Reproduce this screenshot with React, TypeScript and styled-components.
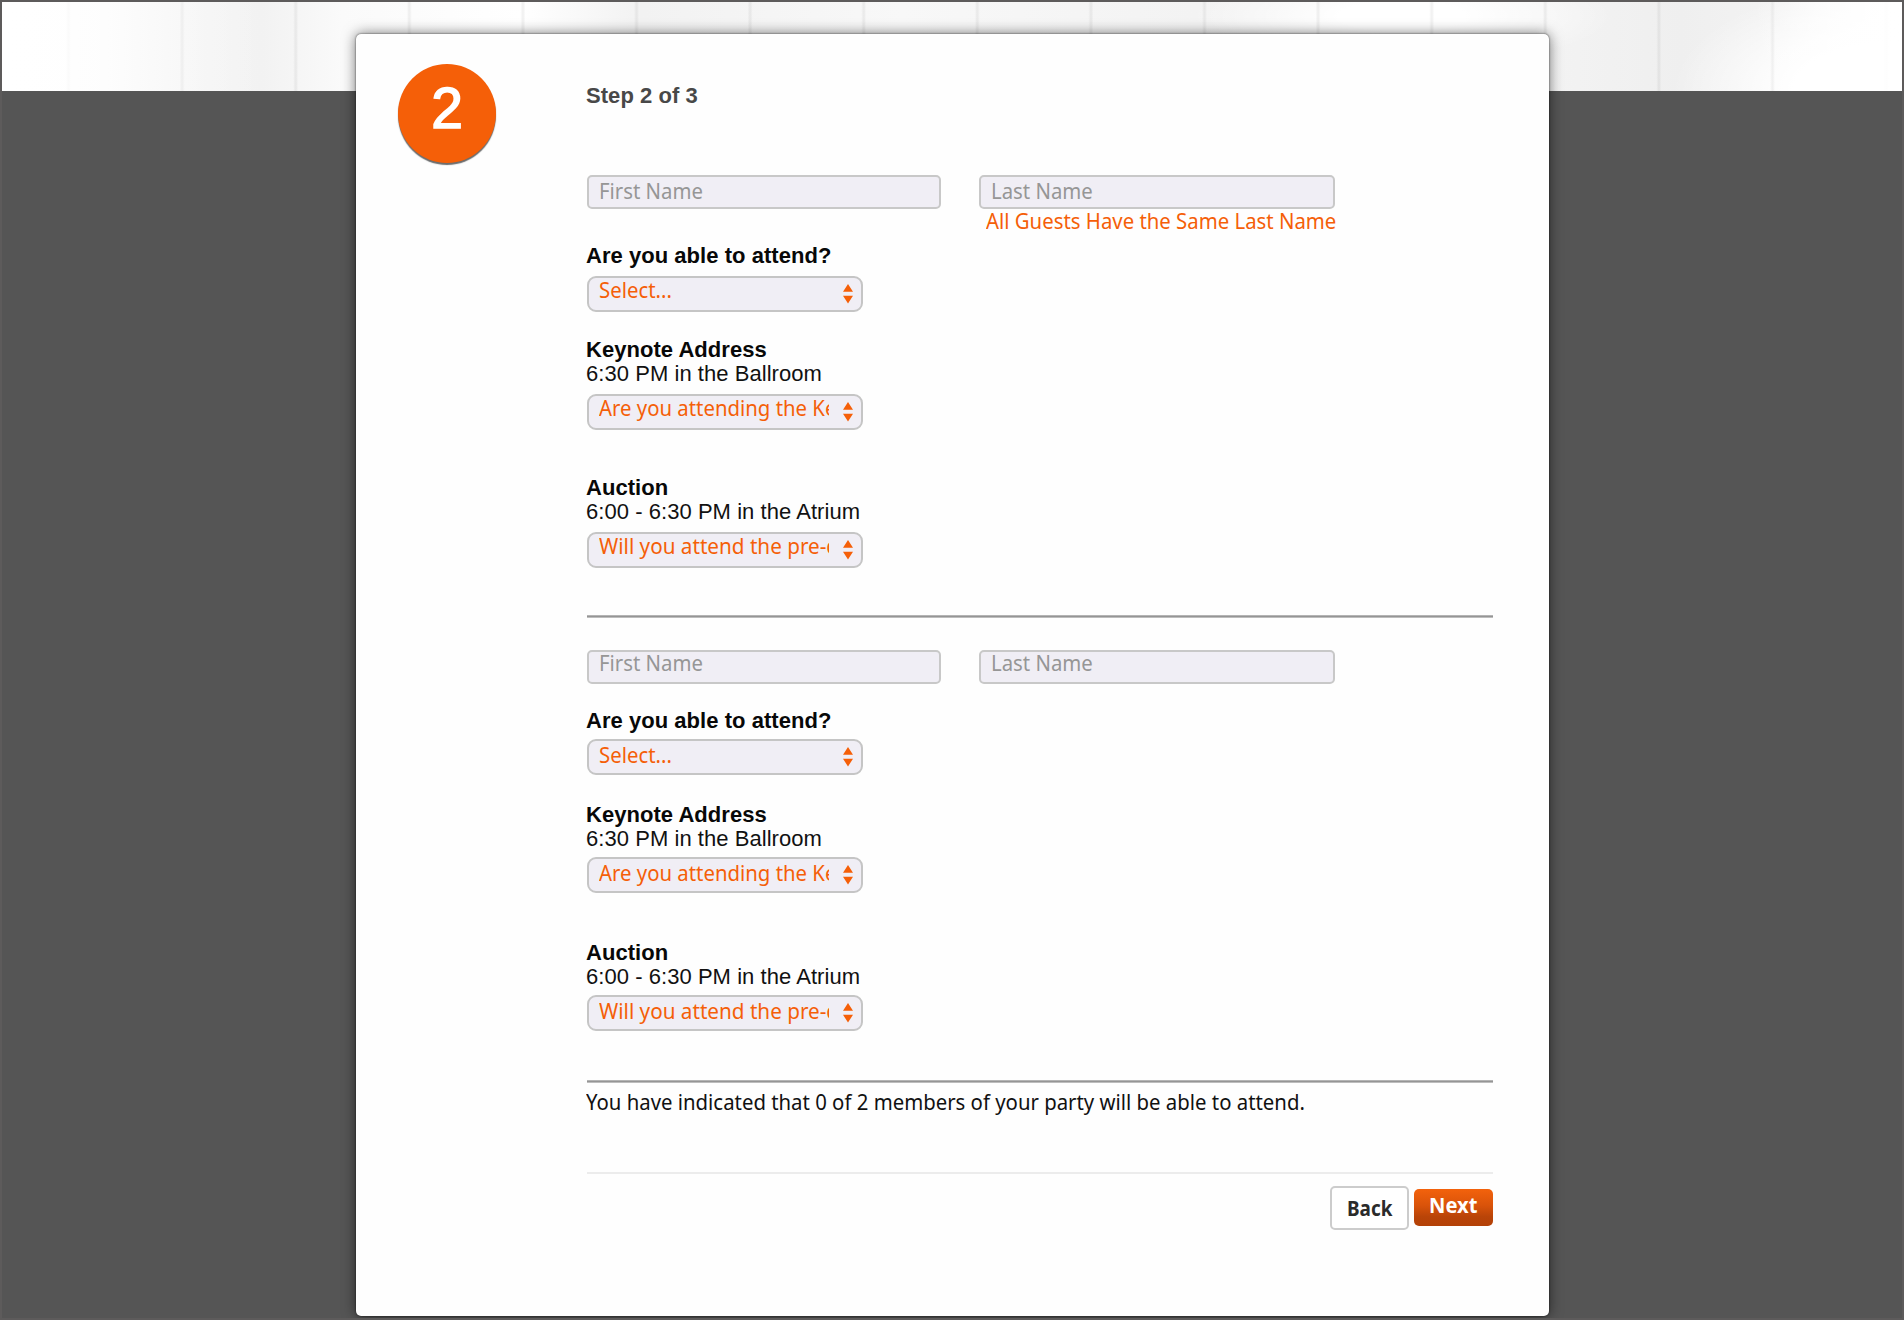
import React from "react";
import styled, { createGlobalStyle } from "styled-components";

const ORANGE = "#f55f08";
const SANS = `"Liberation Sans", Arial, sans-serif`;
const HUMANIST = `"Noto Sans", "Open Sans", sans-serif`;

const GlobalStyle = createGlobalStyle`
  * { box-sizing: border-box; }
  body { margin: 0; background: #555; }
`;

const Page = styled.div`
  height: 1320px;
  overflow: hidden;
  padding: 32px 353px 0 354px;
  border: 2px solid #5d5b5b;
  background: #555;
  position: relative;
`;

const Wall = styled.div`
  position: absolute;
  inset: 0 0 auto 0;
  height: 89px;
  background:
    linear-gradient(90deg, #fff 0, rgba(255, 255, 255, 0) 260px),
    linear-gradient(270deg, #fff 0, rgba(255, 255, 255, 0) 150px),
    repeating-linear-gradient(90deg, transparent 0 64px, rgba(0, 0, 0, 0.05) 66px 67px, transparent 69px 113.6px),
    radial-gradient(ellipse 210px 50px at 1400px 14px, #fff 30%, transparent 100%),
    radial-gradient(ellipse 220px 110px at 1890px 90px, #fff 45%, transparent 100%),
    linear-gradient(90deg, #fff 0, #fdfdfd 60px, #f5f5f5 180px, #f2f2f2 260px, #fafafa 340px, #fff 520px, #f2f2f2 640px, #f8f8f8 900px, #f1f1f1 1310px, #f3f3f3 1540px, #efefef 1680px, #f3f3f3 1780px, #fff 1900px);
`;

const Card = styled.main`
  position: relative;
  display: grid;
  grid-template-columns: 231px 906px;
  align-items: start;
  height: 1282px;
  background: #fefefe;
  border-radius: 5px;
  box-shadow: 0 0 2px rgba(0, 0, 0, 0.7), 0 0 14px rgba(0, 0, 0, 0.55);
`;

const StepBadge = styled.div`
  width: 98px;
  height: 99px;
  margin: 30px 0 0 42px;
  border-radius: 50%;
  background: ${ORANGE};
  box-shadow: 0 2px 1px #6c6c6c;
  color: #fff;
  font: 57px/88px ${SANS};
  -webkit-text-stroke: 1.6px #fff;
  text-align: center;
`;

const Form = styled.form`
  display: flex;
  flex-direction: column;
  padding-top: 50px;
`;

const StepTitle = styled.h1`
  margin: 0 0 67px -1px;
  color: #484848;
  font: bold 22px/24px ${SANS};
  letter-spacing: 0.06px;
`;

const NameRow = styled.div<{ $height: number }>`
  display: grid;
  grid-template-columns: 354px 356px;
  column-gap: 38px;
  align-items: start;
  height: ${(p) => p.$height}px;
`;

const Narrow = styled.span<{ $scale?: number }>`
  display: inline-block;
  transform: scaleX(${(p) => p.$scale ?? 0.925});
  transform-origin: 0 50%;
  white-space: pre;
`;

const NameField = styled.div<{ $lift: number; $indent: number }>`
  height: 34px;
  padding-left: ${(p) => p.$indent}px;
  border: 2px solid #c8c8c8;
  border-radius: 5px;
  background: #f0eef5;
  color: #969696;
  font: 22px/24px ${HUMANIST};
  line-height: ${(p) => 26 - p.$lift * 2}px;
`;

const Hint = styled.div`
  width: 349px;
  margin-top: -1px;
  padding-left: 7px;
  color: ${ORANGE};
  font: 22px/24px ${HUMANIST};
`;

const Question = styled.section<{ $height: number }>`
  height: ${(p) => p.$height}px;
`;

const Heading = styled.h2`
  height: 25px;
  margin: 0 0 0 -1px;
  color: #080808;
  font: bold 22px/26px ${SANS};
  letter-spacing: 0.04px;
`;

const Detail = styled.p`
  margin: 0 0 0 -1px;
  color: #111;
  font: 22px/24px ${SANS};
  letter-spacing: 0.05px;
`;

const Select = styled.div<{ $lift: number }>`
  display: flex;
  justify-content: space-between;
  width: 275.5px;
  height: 36px;
  margin-top: ${(p) => 8 - p.$lift}px;
  padding: 0 8px 0 10px;
  border: 2px solid #c5c5c5;
  border-radius: 9px;
  background: #f0eef5;
  color: ${ORANGE};
`;

const Value = styled.span<{ $lift: number }>`
  width: 229.5px;
  height: 32px;
  overflow-x: clip;
  overflow-y: visible;
  font: 22px/24px ${HUMANIST};
  line-height: ${(p) => 22 + p.$lift * 2}px;
`;

const Arrows = styled.svg`
  flex: none;
  width: 10px;
  height: 20px;
  margin-top: 6px;
`;

const Divider = styled.hr`
  width: 100%;
  height: 3px;
  margin: 0;
  border: 0;
  background: linear-gradient(#b4b4b4 1px, #959595 1px 2px, #bdbdbd 2px);
`;

const Summary = styled.p`
  height: 89px;
  margin: 0 0 0 -1px;
  padding-top: 6px;
  color: #111;
  font: 22px/24px ${HUMANIST};
`;

const Footer = styled.footer`
  display: flex;
  justify-content: flex-end;
  gap: 5px;
  padding-top: 12px;
  border-top: 2px solid #ececec;
`;

const BackButton = styled.button`
  width: 79px;
  height: 44px;
  padding: 0 0 0 15px;
  border: 2px solid #ccc;
  border-radius: 5px;
  background: #fff;
  color: #2b2b2b;
  font: bold 21px/38px ${HUMANIST};
  text-align: left;
`;

const NextButton = styled.button`
  width: 79px;
  height: 37px;
  margin-top: 3px;
  padding: 0 0 4px 15px;
  border: 0;
  border-radius: 5px;
  background: linear-gradient(#f3620c, #d9530a 45%, #b94408 75%, #b34107);
  color: #fff;
  font: bold 21px/33px ${HUMANIST};
  text-align: left;
`;

interface DropdownProps {
  text: string;
  lift: number;
  scale?: number;
}

function Dropdown({ text, lift, scale }: DropdownProps) {
  return (
    <Select $lift={lift}>
      <Value $lift={lift}>
        <Narrow $scale={scale}>{text}</Narrow>
      </Value>
      <Arrows viewBox="0 0 10 20">
        <path d="M0 7.7 5 0l5 7.7zM0 11.8h10L5 19.5z" fill={ORANGE} />
      </Arrows>
    </Select>
  );
}

function Guest({ hint, lift = 0 }: { hint?: string; lift?: number }) {
  return (
    <>
      <NameRow $height={hint ? 68 : 58}>
        <NameField $lift={lift} $indent={9.5}>
          <Narrow>First Name</Narrow>
        </NameField>
        <div>
          <NameField $lift={lift} $indent={10}>
            <Narrow>Last Name</Narrow>
          </NameField>
          {hint && (
            <Hint>
              <Narrow>{hint}</Narrow>
            </Hint>
          )}
        </div>
      </NameRow>
      <Question $height={94}>
        <Heading>Are you able to attend?</Heading>
        <Dropdown text="Select..." lift={lift} />
      </Question>
      <Question $height={138}>
        <Heading>Keynote Address</Heading>
        <Detail>6:30 PM in the Ballroom</Detail>
        <Dropdown text="Are you attending the Keynote?" lift={lift} />
      </Question>
      <Question $height={140}>
        <Heading>Auction</Heading>
        <Detail>6:00 - 6:30 PM in the Atrium</Detail>
        <Dropdown text="Will you attend the pre-dinner auction?" lift={lift} scale={0.94} />
      </Question>
      <Divider />
    </>
  );
}

const SecondGuest = styled.div`
  padding-top: 32px;
`;

export default function App() {
  return (
    <>
      <GlobalStyle />
      <Page>
        <Wall />
        <Card>
          <StepBadge>2</StepBadge>
          <Form>
            <StepTitle>Step 2 of 3</StepTitle>
            <Guest hint="All Guests Have the Same Last Name" />
            <SecondGuest>
              <Guest lift={2.5} />
            </SecondGuest>
            <Summary>
              <Narrow>You have indicated that 0 of 2 members of your party will be able to attend.</Narrow>
            </Summary>
            <Footer>
              <BackButton type="button">
                <Narrow $scale={0.9}>Back</Narrow>
              </BackButton>
              <NextButton type="button">
                <Narrow $scale={0.96}>Next</Narrow>
              </NextButton>
            </Footer>
          </Form>
        </Card>
      </Page>
    </>
  );
}
